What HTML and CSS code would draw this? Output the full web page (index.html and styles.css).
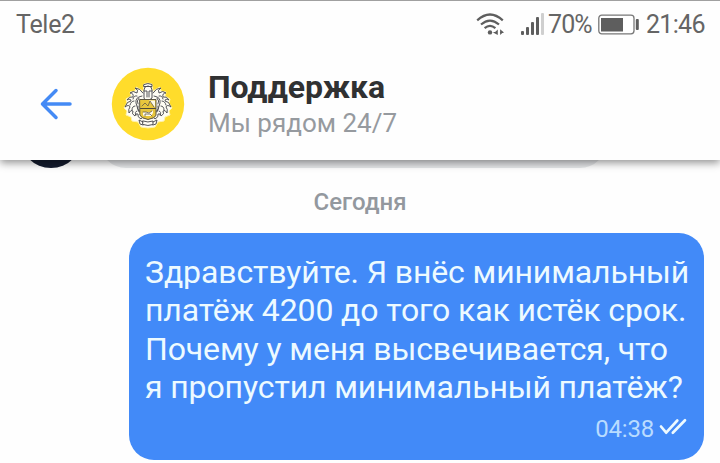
FILE: index.html
```html
<!DOCTYPE html>
<html lang="ru">
<head>
<meta charset="utf-8">
<title>Поддержка</title>
<link rel="stylesheet" href="styles.css">
</head>
<body>
<header class="header">
  <div class="status">
    <span class="carrier">Tele2</span>
    <svg class="wifi" width="28" height="24" viewBox="0 0 28 24" fill="none" stroke="#5e5e5e" stroke-width="2.2">
      <path d="M1.2 7.4Q14-4.4 26.8 7.4M5 11.5Q14 3.6 23 11.5M8.6 15.2Q14 10.7 19.4 15.2"/>
      <circle cx="14" cy="19.4" r="2.2" fill="#5e5e5e" stroke="none"/>
      <path d="M17.5 19.5h3.5M24 19.5h3.5" stroke-width="1.2"/>
      <path d="M18 20l3.8-3.5v5.5zM27.4 19l-3.3-2.7v5.7z" fill="#5e5e5e" stroke="none"/>
    </svg>
    <svg class="signal" width="24" height="24" viewBox="0 0 24 24">
      <g fill="#5e5e5e"><rect x="0" y="18" width="3" height="4" rx="1"/><rect x="5" y="14" width="3" height="8" rx="1"/><rect x="10" y="9" width="3" height="13" rx="1"/><rect x="15" y="4" width="3" height="18" rx="1"/></g>
      <rect x="20" y="0" width="3" height="22" rx="1" fill="#cfcfcf"/>
    </svg>
    <span class="percent">70%</span>
    <svg class="battery" width="41" height="22" viewBox="0 0 41 22">
      <rect x=".8" y="1.2" width="35.2" height="18.6" rx="3" fill="#fff" stroke="#777" stroke-width="1.3"/>
      <rect x="3" y="4" width="22" height="13.5" fill="#5e5e5e"/>
      <rect x="37.8" y="5" width="3" height="11" rx="1" fill="#5e5e5e"/>
    </svg>
    <span class="clock">21:46</span>
  </div>
  <div class="toolbar">
    <svg class="back" width="32" height="32" viewBox="0 0 32 32" fill="none" stroke="#448af5" stroke-width="3.5" stroke-linecap="round" stroke-linejoin="round"><path d="M30 16H2.5M16 2.5L2.5 16L16 29.5"/></svg>
    <svg class="avatar" width="74" height="74" viewBox="0 0 74 74">
      <circle cx="37" cy="37" r="36.2" fill="#ffdc2b"/>
      <g stroke-linejoin="round" stroke-linecap="round">
        <path d="M33 17q4-2 8 0l1 7 7-4 1 4 5 1-1 4 5 3-1 4 3 5-3 3 1 4-5 2-1 4-6 1-3 5q-7 2-14 0l-3-5-6-1-1-4-5-2 1-4-3-3 3-5-1-4 5-3-1-4 5-1 1-4 7 4z" fill="#fffdf4" stroke="#fff4ac" stroke-width="1"/>
        <g fill="none" stroke="#4b4b50" stroke-width=".95">
          <g>
            <path d="M32 26q-3-5-8-5 4 2 2 5-4-3-7 0 4 0 3 4-4-1-6 3 4-2 4 1-4 0-6 6 4-3 5 0-2 2-1 6 2-4 4-2-2 3 2 5 0-3 3-2-1 3 3 5 1-3 3-1"/>
            <path d="M31 29q-7 1-6 7 1 7 5 10M26 29q-3-1-4 3M23 34q-3 0-4 4M24 39q-3 0-3 4M26 44q-3 1-1 4M28 31q-3 3-1 6M27 39q-1 3 1 6"/>
          </g>
          <g transform="translate(74 0) scale(-1 1)">
            <path d="M32 26q-3-5-8-5 4 2 2 5-4-3-7 0 4 0 3 4-4-1-6 3 4-2 4 1-4 0-6 6 4-3 5 0-2 2-1 6 2-4 4-2-2 3 2 5 0-3 3-2-1 3 3 5 1-3 3-1"/>
            <path d="M31 29q-7 1-6 7 1 7 5 10M26 29q-3-1-4 3M23 34q-3 0-4 4M24 39q-3 0-3 4M26 44q-3 1-1 4M28 31q-3 3-1 6M27 39q-1 3 1 6"/>
          </g>
          <path d="M33 31v-8q0-4 4-4t4 4v8l-4 3zM33 24h3v6M41 24h-3v6M33 17.5q4-2 8 0v2h-8z"/>
          <path d="M32 54q5 2 10 0v3.5q-5 2-10 0zM32 55l-4-2 1 4 3 1M42 55l4-2-1 4-3 1"/>
        </g>
        <path d="M29 32.5h16v16q-1 2.500-8 4-7-1.500-8-4z" fill="#e8c63d" stroke="#5b5543"/>
        <path d="M29.500 41.500h15" stroke="#4e4a38"/>
        <path d="M38 33.500h6v7zM32 48v-3h8l2-2v3l-2 3h-7z" fill="#fffbe9"/>
        <path d="M31 39l3-3 3 3 2-5 4 6M32 45h3l3 1 3-2M34 49v-2h5l2 2" fill="none" stroke="#625c48" stroke-width=".8"/>
      </g>
    </svg>
    <div class="titles">
      <h1 class="title">Поддержка</h1>
      <p class="subtitle">Мы рядом 24/7</p>
    </div>
  </div>
</header>
<main class="chat">
  <div class="previous"><div class="sender"></div><div class="incoming"></div></div>
  <div class="day">Сегодня</div>
  <article class="message">
    <p class="text"><span class="line">Здравствуйте. Я внёс минимальный</span> <span class="line">платёж 4200 до того как истёк срок.</span> <span class="line">Почему у меня высвечивается, что</span> <span class="line">я пропустил минимальный платёж?</span></p>
    <div class="meta"><time>04:38</time>
      <svg class="checks" width="28" height="18" viewBox="0 0 28 18" fill="none" stroke="#edfaff" stroke-width="2.7" stroke-linecap="round" stroke-linejoin="round"><path d="M2 8.500l5.200 6.200L18.300 2.500M13.800 14.700L26 2.300"/></svg>
    </div>
  </article>
</main>
</body>
</html>
```
FILE: styles.css
```css
* { box-sizing: border-box; }
body {
  margin: 0;
  width: 720px;
  height: 463px;
  overflow: hidden;
  background: #fefefe;
  font-family: Roboto, "Liberation Sans", sans-serif;
}
h1, p { margin: 0; }
svg { display: block; flex: none; }
.header {
  position: relative;
  z-index: 1;
  height: 160px;
  background: #fefefe;
  border-top: 1px solid #a0a0a0;
  box-shadow: 0 3px 8px rgba(0, 0, 0, .42);
}
.status {
  height: 48px;
  display: flex;
  align-items: center;
  padding: 0 0 0 16px;
  color: #656565;
  font-size: 25px;
  line-height: 30px;
  white-space: nowrap;
}
.carrier { width: 460px; letter-spacing: -.3px; }
.wifi { margin-right: 17px; }
.signal { margin-right: 3px; }
.percent { width: 50px; letter-spacing: -.9px; }
.clock { margin-left: 7px; letter-spacing: -.7px; }
.toolbar {
  display: flex;
  align-items: center;
  height: 110px;
  padding-left: 40px;
}
.avatar { margin-left: 39px; }
.titles { margin-left: 23px; }
.title {
  color: #303132;
  font-size: 32px;
  line-height: 38px;
  font-weight: 700;
  letter-spacing: -.1px;
}
.subtitle {
  color: #969a9f;
  font-size: 26px;
  line-height: 34px;
}
.chat { display: flex; flex-direction: column; }
.previous {
  display: flex;
  align-items: flex-end;
  height: 8px;
  padding-left: 20px;
}
.sender {
  flex: none;
  width: 62px;
  height: 62px;
  border-radius: 50%;
  background: #141c2e;
}
.incoming {
  width: 506px;
  height: 62px;
  margin-left: 18px;
  border-radius: 26px;
  background: #e5e7e9;
}
.day {
  height: 65px;
  padding-top: 19px;
  color: #93989e;
  font-size: 24px;
  line-height: 30px;
  font-weight: 500;
  text-align: center;
}
.message {
  width: 575px;
  height: 227px;
  margin-left: 129px;
  padding: 20px 17px 0 16px;
  border-radius: 25px;
  background: #428af8;
}
.text {
  color: #edfaff;
  font-size: 32px;
  line-height: 38.3px;
  letter-spacing: -.12px;
}
.line { display: block; white-space: nowrap; }
.meta {
  display: flex;
  align-items: center;
  justify-content: flex-end;
  gap: 5px;
  height: 30px;
  margin-top: 8px;
  color: #b9dcff;
  font-size: 24px;
  letter-spacing: -.2px;
}
.checks { margin-top: -4px; }
```
